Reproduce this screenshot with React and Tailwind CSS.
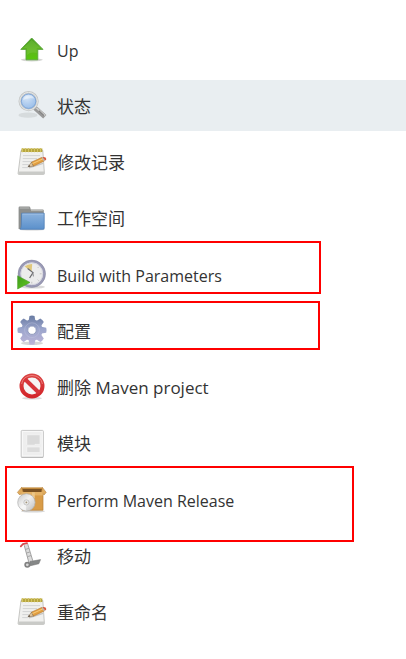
import React from 'react';

const UpIcon = () => (
  <svg viewBox="0 0 32 32" className="w-8 h-8 shrink-0" aria-hidden="true">
    <defs>
      <linearGradient id="up" x1="0" y1="0" x2="0" y2="1">
        <stop offset="0" stopColor="#459a1e" />
        <stop offset="0.55" stopColor="#5fb51f" />
        <stop offset="1" stopColor="#57c70c" />
      </linearGradient>
    </defs>
    <ellipse cx="15.8" cy="26.8" rx="11" ry="1.6" fill="#b9bbb6" opacity="0.6" />
    <path d="M15.7 5 27 16.4H21.8V26.8H10V16.4H4.8Z" fill="url(#up)" stroke="#5aa53c" strokeWidth="0.9" strokeLinejoin="round" />
    <path d="M15.7 6.8 24.4 15.2H20.7V20Q15 18.5 11.1 22V15.2H7.2Z" fill="#8bd05a" opacity="0.3" />
  </svg>
);

const SearchIcon = () => (
  <svg viewBox="0 0 32 32" className="w-8 h-8 shrink-0" aria-hidden="true">
    <defs>
      <radialGradient id="lens" cx="0.4" cy="0.3" r="0.8">
        <stop offset="0" stopColor="#d3e4f7" />
        <stop offset="0.5" stopColor="#aecbee" />
        <stop offset="1" stopColor="#8fb8e6" />
      </radialGradient>
    </defs>
    <ellipse cx="12" cy="26.2" rx="9.5" ry="2.6" fill="#c3c8ca" opacity="0.5" />
    <path d="M19 19 28.8 27.8" stroke="#999" strokeWidth="4.8" />
    <path d="M20.4 18.8 29.2 26.6" stroke="#cdcdcb" strokeWidth="1.6" />
    <path d="M22.8 21.8 28 26.6" stroke="#828282" strokeWidth="1.2" />
    <circle cx="12.6" cy="12.2" r="8.8" fill="url(#lens)" stroke="#c3c5c5" strokeWidth="2.6" />
    <circle cx="12.6" cy="12.2" r="8.8" fill="none" stroke="#e6e8e8" strokeWidth="1" />
    <circle cx="12.6" cy="12.2" r="7.2" fill="none" stroke="#7ba3d6" strokeWidth="0.9" />
    <path d="M7 11Q8 6.5 13 6.3 17 6.4 18 9.5 12 8.5 7 11Z" fill="#fff" opacity="0.45" />
  </svg>
);

const NotepadIcon = () => (
  <svg viewBox="0 0 32 32" className="w-8 h-8 shrink-0" aria-hidden="true">
    <path d="M5 5.5H26.8L28.4 28.6Q28.4 29.4 27.4 29.4H3Q2 29.4 2.1 28.4Z" fill="#f0f0ee" stroke="#bfc0bc" strokeWidth="0.9" />
    <path d="M2.4 26.6H28.2L28.4 29.2H2.2Z" fill="#c9cac7" />
    <path d="M7 10.6H24M6.8 13.6H21M6.6 16.6H18M6.4 19.6H13M6.2 22.6H12" stroke="#cfd0d0" strokeWidth="0.9" />
    <path d="M5.5 3.6H26.4V7H5.3Z" fill="#b7a63e" />
    <path d="M6.5 3V7.2M9.5 3V7.2M12.5 3V7.2M15.5 3V7.2M18.5 3V7.2M21.5 3V7.2M24.5 3V7.2" stroke="#d3c464" strokeWidth="1" />
    <path d="M13 22.8 27 18.4" stroke="#999" strokeWidth="1.4" opacity="0.5" />
    <path d="M15.4 17.2 26 12.3 28.4 15.9 17.4 21.2Z" fill="#e3a040" stroke="#b37530" strokeWidth="0.6" />
    <path d="M16 18.8 27 13.8" stroke="#f6cb7d" strokeWidth="1" />
    <path d="M15.4 17.2 12 21.8 17.4 21.2Z" fill="#dfc39a" stroke="#7d6448" strokeWidth="0.5" />
    <path d="M12 21.8 13.2 20.1 14.2 21.6Z" fill="#3c352e" />
    <path d="M25.4 12.6 27.8 16.2 29 15.6 26.6 12Z" fill="#b9b9b3" />
    <path d="M26.6 12Q30 11.4 30.3 14 30.2 15.2 29 15.6Z" fill="#d9583f" />
  </svg>
);

const FolderIcon = () => (
  <svg viewBox="0 0 32 32" className="w-8 h-8 shrink-0" aria-hidden="true">
    <defs>
      <linearGradient id="folder" x1="0" y1="0" x2="0" y2="1">
        <stop offset="0" stopColor="#8bb2dd" />
        <stop offset="1" stopColor="#5b90cb" />
      </linearGradient>
    </defs>
    <ellipse cx="16" cy="28.6" rx="13" ry="1" fill="#aaa" opacity="0.5" />
    <path d="M2.6 28V6.8Q2.6 5.6 3.8 5.6H13Q14.2 5.6 14.4 7L14.7 8.4H26.6Q27.8 8.4 27.8 9.6V28Z" fill="#8d8f8d" />
    <path d="M3.6 7H13.4M15 9.6H26.8" stroke="#b9bbb9" strokeWidth="1" />
    <path d="M5.6 12.2H28.2V27.2Q28.2 28.3 27.2 28.3H4.2Q5.2 27 5.3 24Z" fill="url(#folder)" stroke="#4f7db5" strokeWidth="0.8" />
    <path d="M6.4 13.1H27.4" stroke="#a5c5e8" strokeWidth="0.8" />
  </svg>
);

const ClockIcon = () => (
  <svg viewBox="0 0 32 32" className="w-8 h-8 shrink-0" aria-hidden="true">
    <defs>
      <linearGradient id="play" x1="0" y1="0" x2="1" y2="1">
        <stop offset="0" stopColor="#3f9c1d" />
        <stop offset="1" stopColor="#63c91d" />
      </linearGradient>
    </defs>
    <ellipse cx="17" cy="29" rx="12" ry="1.6" fill="#aaa" opacity="0.45" />
    <circle cx="15.8" cy="15.8" r="12.5" fill="#ececec" stroke="#9a9ab6" strokeWidth="2.6" />
    <circle cx="15.8" cy="15.8" r="13.7" fill="none" stroke="#84849c" strokeWidth="0.5" />
    <circle cx="15.8" cy="15.8" r="10.9" fill="none" stroke="#d0d0dc" strokeWidth="0.8" />
    <path d="M15.6 13.4 8.6 8.6Q11.6 5.8 16.2 6Z" fill="#e0c77a" />
    <path d="M25.6 15.8H23.8M22.8 8.8 21.6 10M22.8 22.8 21.6 21.6M15.8 25.6V23.8" stroke="#c0c0c0" strokeWidth="0.9" />
    <path d="M11.6 10.6 17 14.6 13.6 20" fill="none" stroke="#6c6c70" strokeWidth="1.2" />
    <path d="M16.8 14.8 17.4 18.4" stroke="#88888b" strokeWidth="1" />
    <path d="M1.6 17.8 14 24.4 1.6 31Z" fill="url(#play)" stroke="#4ba02c" strokeWidth="0.6" strokeLinejoin="round" />
  </svg>
);

const gearTeeth = [0, 45, 90, 135, 180, 225, 270, 315];

const GearIcon = () => (
  <svg viewBox="0 0 32 32" className="w-8 h-8 shrink-0" aria-hidden="true">
    <defs>
      <linearGradient id="gear" gradientUnits="userSpaceOnUse" x1="16" y1="2" x2="16" y2="31">
        <stop offset="0" stopColor="#6a7ca3" />
        <stop offset="0.45" stopColor="#9ba5cc" />
        <stop offset="1" stopColor="#bdb5d8" />
      </linearGradient>
      <mask id="gearMask">
        <circle cx="16" cy="16.2" r="10.6" fill="#fff" />
        {gearTeeth.map((deg) => (
          <path
            key={deg}
            d="M12.4 8 13.5 2Q16 1.2 18.5 2L19.6 8Z"
            fill="#fff"
            transform={`rotate(${deg} 16 16.2)`}
          />
        ))}
        <circle cx="16" cy="16.2" r="3.8" fill="#000" />
      </mask>
    </defs>
    <ellipse cx="16" cy="29.2" rx="11" ry="1.8" fill="#999" opacity="0.4" />
    <rect width="32" height="32" fill="url(#gear)" mask="url(#gearMask)" />
    <circle cx="16" cy="16.2" r="4.2" fill="#fff" stroke="#8a95b8" strokeWidth="0.9" />
    <circle cx="16" cy="16.2" r="7.4" fill="none" stroke="#c3c9e2" strokeWidth="1" opacity="0.4" />
  </svg>
);

const DeleteIcon = () => (
  <svg viewBox="0 0 32 32" className="w-8 h-8 shrink-0" aria-hidden="true">
    <defs>
      <linearGradient id="stop" x1="0" y1="0" x2="0" y2="1">
        <stop offset="0" stopColor="#d94242" />
        <stop offset="1" stopColor="#d3262b" />
      </linearGradient>
    </defs>
    <ellipse cx="16" cy="28.2" rx="10" ry="1.4" fill="#999" opacity="0.35" />
    <circle cx="16" cy="16" r="10.5" fill="#f6f4f4" stroke="url(#stop)" strokeWidth="4" />
    <path d="M8.8 9 23.2 23" stroke="#d7343a" strokeWidth="4" />
    <path d="M5.6 14Q7 6 16 5.4 25 6 26.4 14" fill="none" stroke="#f08a84" strokeWidth="1" opacity="0.8" />
  </svg>
);

const ModuleIcon = () => (
  <svg viewBox="0 0 32 32" className="w-8 h-8 shrink-0" aria-hidden="true">
    <rect x="5.2" y="4.4" width="22.2" height="27" rx="1" fill="#eeeeee" stroke="#c6c6c6" strokeWidth="1" />
    <path d="M5.4 31.2H27.2" stroke="#b2b2b2" strokeWidth="1" />
    <rect x="6.4" y="5.6" width="19.8" height="24.4" fill="none" stroke="#fafafa" strokeWidth="0.9" />
    <path d="M10.8 8.8H24V18.4H19V19.2H10.8Z" fill="#dadada" stroke="#f8f8f8" strokeWidth="0.6" />
    <path d="M10.8 21H24V26.6H10.8Z" fill="#dcdcdc" stroke="#f8f8f8" strokeWidth="0.6" />
  </svg>
);

const ReleaseIcon = () => (
  <svg viewBox="0 0 32 32" className="w-8 h-8 shrink-0" aria-hidden="true">
    <defs>
      <linearGradient id="disc" x1="0" y1="0" x2="1" y2="1">
        <stop offset="0" stopColor="#c9c9c9" />
        <stop offset="0.45" stopColor="#f1f1f1" />
        <stop offset="1" stopColor="#bcbcbc" />
      </linearGradient>
    </defs>
    <ellipse cx="17" cy="28.2" rx="12" ry="1.4" fill="#999" opacity="0.4" />
    <path d="M6 8.6H27V27.2H6Z" fill="#d99c47" stroke="#b8823a" strokeWidth="0.7" />
    <path d="M6 5H26L27.2 9H5Z" fill="#7b5222" />
    <path d="M5 4.4H26.8V6H5Z" fill="#c28a3c" />
    <path d="M5.6 4.4 1.4 9.4 3.8 12 7 8.8ZM26.4 4.4 30.2 9.4 28 12 25.6 8.8Z" fill="#e0ab5d" stroke="#b98541" strokeWidth="0.6" />
    <path d="M5.4 9H26.8V12.4H5.4Z" fill="#e5b367" />
    <path d="M16 9.4H18.8V15H16Z" fill="#ecc788" />
    <circle cx="10.4" cy="19.4" r="8.7" fill="url(#disc)" stroke="#b0b0b0" strokeWidth="0.7" />
    <path d="M10.4 19.4 4.4 24.6Q7 27.4 10 27.4Z" fill="#fff" opacity="0.6" />
    <circle cx="10.4" cy="19.4" r="2.6" fill="#ececec" stroke="#b5b5b5" strokeWidth="0.7" />
    <circle cx="10.4" cy="19.4" r="0.9" fill="#a09276" />
  </svg>
);

const MoveIcon = () => (
  <svg viewBox="0 0 32 32" className="w-8 h-8 shrink-0" aria-hidden="true">
    <path d="M8.2 6.4 11.4 4.6 16.8 22 13 24Z" fill="#dcdcdc" />
    <path d="M8.2 6.2 13 24M11.6 4.6 16.8 21.8" fill="none" stroke="#a3a3a3" strokeWidth="1" />
    <path d="M9.6 10.4 12.8 9.4M10.6 14 13.8 13M11.6 17.6 15 16.6" stroke="#979797" strokeWidth="0.8" />
    <path d="M4.8 7.4 7 5 11 4.2" fill="none" stroke="#d8484b" strokeWidth="1.8" strokeLinecap="round" />
    <path d="M14 22.4 24.6 20.6 22.8 24.8 13.4 27Z" fill="#858787" stroke="#6c6c6c" strokeWidth="0.5" />
    <circle cx="11.3" cy="25.8" r="3" fill="#808080" />
    <circle cx="11.3" cy="25.8" r="1.4" fill="#d8d8d8" />
  </svg>
);

// outline: red annotation frame drawn over the entry
const menuGroups = [
  [
    { name: 'Up', icon: UpIcon, latin: true },
    { name: '状态', icon: SearchIcon, active: true },
    { name: '修改记录', icon: NotepadIcon },
    { name: '工作空间', icon: FolderIcon },
  ],
  [
    {
      name: 'Build with Parameters',
      icon: ClockIcon,
      latin: true,
      outline: 'left-[5px] -top-2 w-[316px] h-[53px]',
    },
    { name: '配置', icon: GearIcon, outline: 'left-[11px] -top-1 w-[309px] h-[49px]' },
    { name: '删除 Maven project', icon: DeleteIcon },
    { name: '模块', icon: ModuleIcon },
  ],
  [
    {
      name: 'Perform Maven Release',
      icon: ReleaseIcon,
      latin: true,
      outline: 'left-[5px] -top-2 w-[349px] h-[76px]',
    },
    { name: '移动', icon: MoveIcon },
    { name: '重命名', icon: NotepadIcon },
  ],
];

const MenuItem = ({ item }) => {
  const Icon = item.icon;

  return (
    <li className="relative">
      <a
        href="#"
        aria-current={item.active ? 'page' : undefined}
        className={`flex items-center gap-[9px] px-4 pt-[9px] pb-[10px] ${
          item.active ? 'bg-[#e9eef1]' : ''
        }`}
      >
        <Icon />
        <span className={`pt-1 leading-7 ${item.latin ? 'text-[16px]' : 'text-[17px]'}`}>
          {item.name}
        </span>
      </a>
      {item.outline && (
        <span
          className={`absolute z-10 border-2 border-[#ff0000] pointer-events-none ${item.outline}`}
        />
      )}
    </li>
  );
};

const App = () => {
  return (
    <nav className="min-h-screen bg-white pt-6 pb-5 text-[#333333] font-['Open_Sans','Noto_Sans_CJK_SC',sans-serif]">
      <div className="flex flex-col gap-[6px]">
        {menuGroups.map((group) => (
          <ul key={group[0].name} className="flex flex-col gap-[5px]">
            {group.map((item) => (
              <MenuItem key={item.name} item={item} />
            ))}
          </ul>
        ))}
      </div>
    </nav>
  );
};

export default App;
